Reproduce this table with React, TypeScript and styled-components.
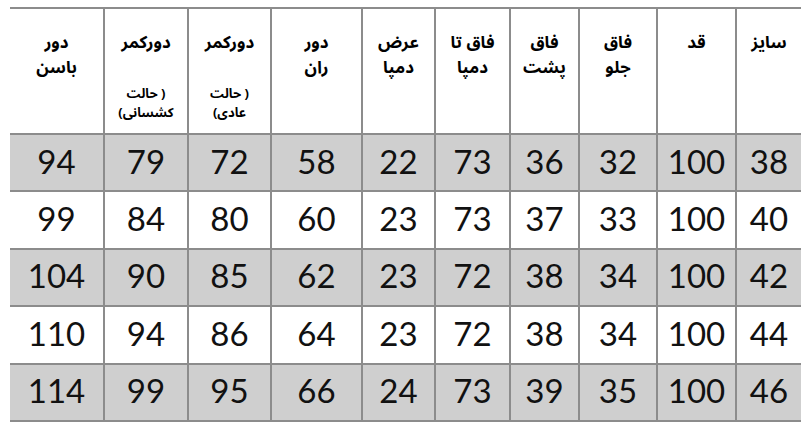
import React from "react";
import styled, { createGlobalStyle } from "styled-components";

const Global = createGlobalStyle`
  html, body { margin: 0; padding: 0; background: #ffffff; }
  body { width: 801px; height: 426px; overflow: hidden; }
`;

const Page = styled.div`
  padding: 7px 0 0 10px;
`;

const Table = styled.table`
  direction: rtl;
  border-collapse: collapse;
  table-layout: fixed;
  width: 791px;
`;

const Col = styled.col<{ $w: number }>`
  width: ${(p) => p.$w}px;
`;

const HeadRow = styled.tr`
  height: 126px;
  background: #ffffff;
`;

const Row = styled.tr<{ $shaded: boolean }>`
  height: 57.4px;
  background: ${(p) => (p.$shaded ? "#cfcfcf" : "#ffffff")};
`;

const Th = styled.th`
  box-sizing: border-box;
  padding: 22px 0 0;
  vertical-align: top;
  text-align: center;
  font-family: "Noto Sans Arabic", "DejaVu Sans", sans-serif;
  font-weight: bold;
  font-size: 17px;
  line-height: 25px;
  color: #000;
  border-top: 2px solid #8c8c8c;
  border-bottom: 2px solid #8c8c8c;
  border-left: 2px solid #8c8c8c;
  &:last-child { border-left: none; }
`;

const Line = styled.div``;

const SubBlock = styled.div`
  margin-top: 29px;
  font-size: 13px;
  line-height: 19px;
`;

const SubLine = styled.div``;

const Td = styled.td`
  box-sizing: border-box;
  padding: 0 0 4px;
  text-align: center;
  vertical-align: middle;
  font-family: Lato, "Open Sans", sans-serif;
  font-size: 33px;
  color: #111;
  border-bottom: 2px solid #8c8c8c;
  border-left: 2px solid #8c8c8c;
  &:last-child { border-left: none; }
`;

type Column = { w: number; lines: string[]; sub?: string };

const cols: Column[] = [
  { w: 65, lines: ["سایز"] },
  { w: 79, lines: ["قد"] },
  { w: 78, lines: ["فاق", "جلو"] },
  { w: 69, lines: ["فاق", "پشت"] },
  { w: 75, lines: ["فاق تا", "دمپا"] },
  { w: 73, lines: ["عرض", "دمپا"] },
  { w: 91, lines: ["دور", "ران"] },
  { w: 83, lines: ["دورکمر"], sub: "عادی" },
  { w: 84, lines: ["دورکمر"], sub: "کشسانی" },
  { w: 94, lines: ["دور", "باسن"] },
];

const rows: number[][] = [
  [38, 100, 32, 36, 73, 22, 58, 72, 79, 94],
  [40, 100, 33, 37, 73, 23, 60, 80, 84, 99],
  [42, 100, 34, 38, 72, 23, 62, 85, 90, 104],
  [44, 100, 34, 38, 72, 23, 64, 86, 94, 110],
  [46, 100, 35, 39, 73, 24, 66, 95, 99, 114],
];

const LRI = "\u2066";
const PDI = "\u2069";

export default function App() {
  return (
    <Page>
      <Global />
      <Table>
        <colgroup>
          {cols.map((c, i) => (
            <Col key={i} $w={c.w} />
          ))}
        </colgroup>
        <thead>
          <HeadRow>
            {cols.map((c, i) => (
              <Th key={i}>
                {c.lines.map((l, j) => (
                  <Line key={j}>{l}</Line>
                ))}
                {c.sub && (
                  <SubBlock>
                    <SubLine>{LRI + "حالت )" + PDI}</SubLine>
                    <SubLine>{LRI + "(" + c.sub + PDI}</SubLine>
                  </SubBlock>
                )}
              </Th>
            ))}
          </HeadRow>
        </thead>
        <tbody>
          {rows.map((r, i) => (
            <Row key={i} $shaded={i % 2 === 0}>
              {r.map((v, j) => (
                <Td key={j}>{v}</Td>
              ))}
            </Row>
          ))}
        </tbody>
      </Table>
    </Page>
  );
}
